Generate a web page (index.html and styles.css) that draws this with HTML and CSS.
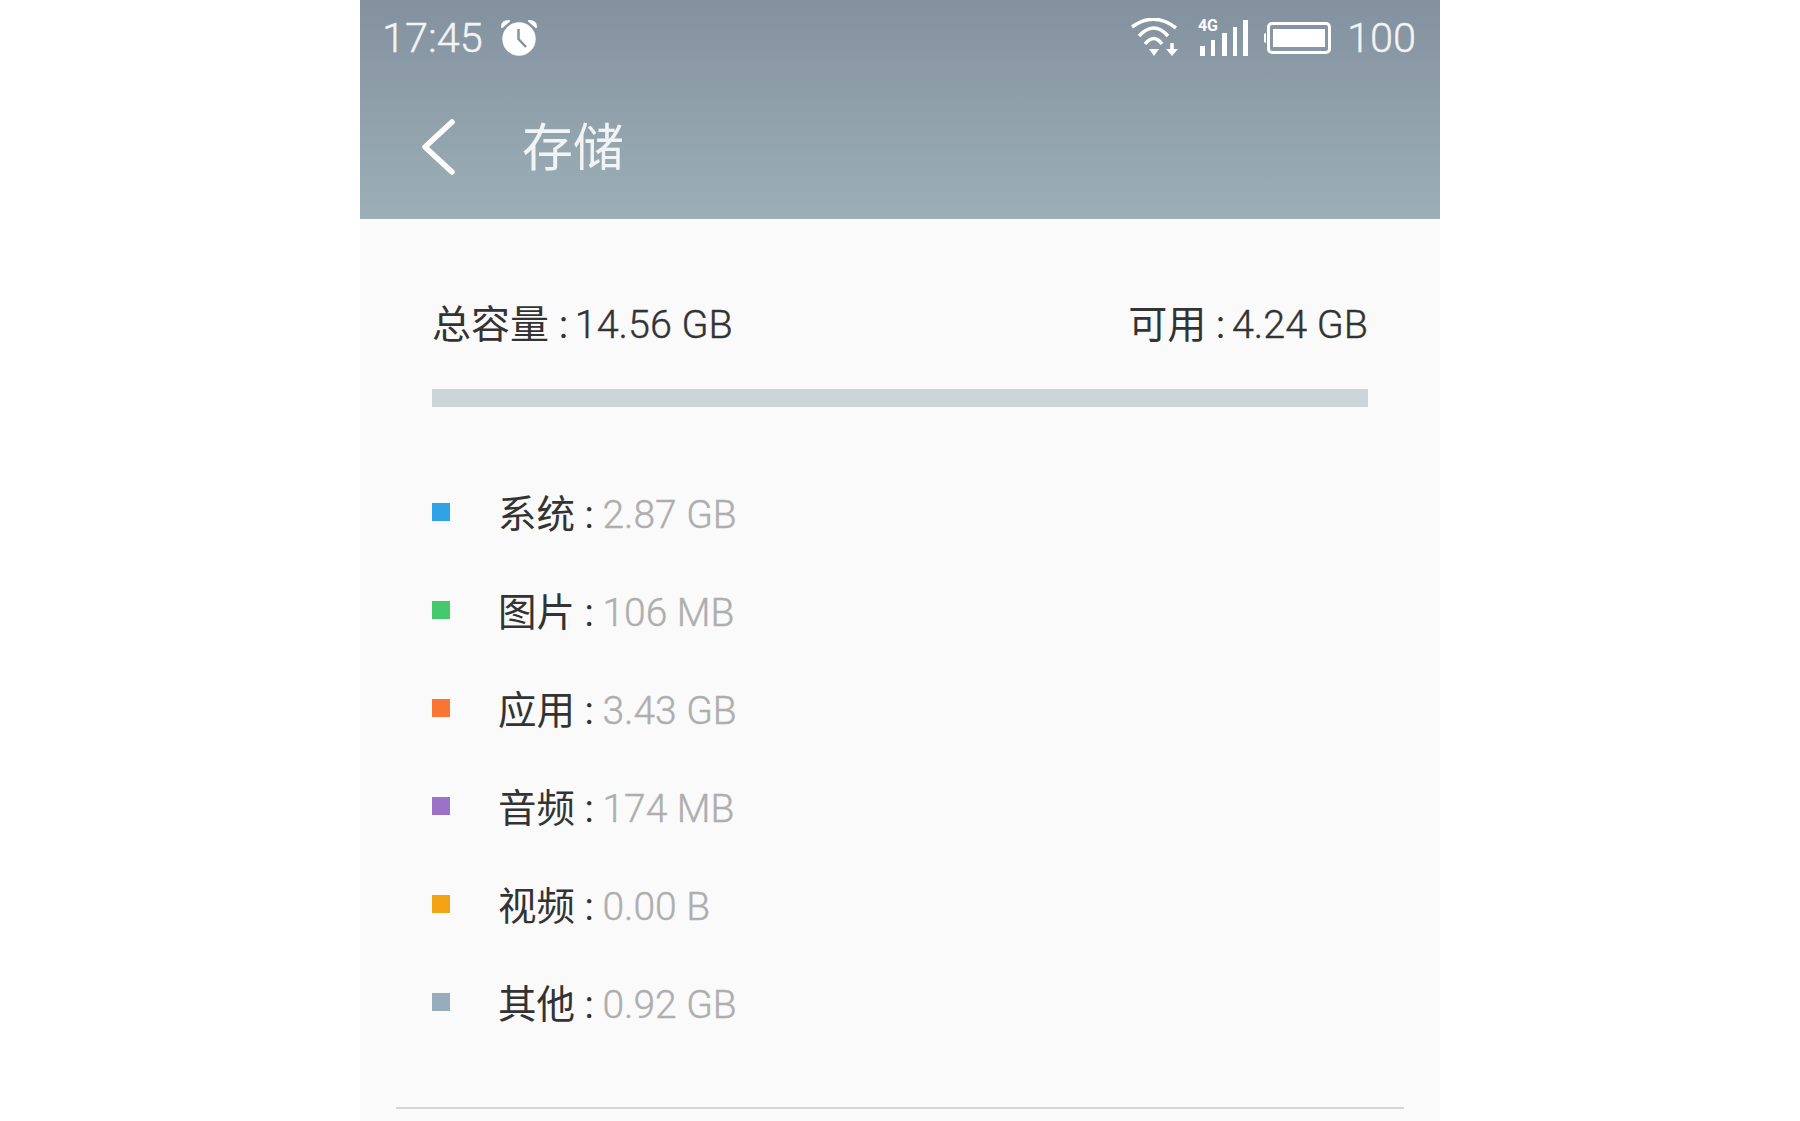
FILE: index.html
```html
<!DOCTYPE html>
<html lang="zh-CN">
<head>
  <meta charset="UTF-8">
  <title>存储</title>
  <link rel="stylesheet" href="styles.css">
</head>
<body>
  <div class="phone">
    <header class="header">
      <div class="status-bar">
        <div class="status-left">
          <span class="status-text">17:45</span>
          <svg class="alarm" width="38" height="38" viewBox="0 0 38 38">
            <circle cx="19" cy="20" r="16.7" fill="#fff"/>
            <path d="M2 8 Q2 2 9 2 Z M36 8 Q36 2 29 2 Z" fill="#fff" stroke="#fff" stroke-width="2" stroke-linejoin="round"/>
            <path d="M18.5 10 V20 L26 28" fill="none" stroke="#8593a0" stroke-width="2.5"/>
          </svg>
        </div>
        <div class="status-right">
          <svg class="wifi" width="47" height="40" viewBox="0 0 47 40">
            <path d="M1 9 Q23 -7 45 10 M8 18 Q23 2 37 18 M14 26 Q23 15 31 26" fill="none" stroke="#fff" stroke-width="3.5"/>
            <path d="M18 31 H28 L23 38 Z" fill="#fff"/>
            <path d="M41 25 V33" stroke="#fff" stroke-width="3.5"/>
            <path d="M35 31 H47 L41 38 Z" fill="#fff"/>
          </svg>
          <div class="signal">
            <span class="signal-label">4G</span>
            <svg width="48" height="36" viewBox="0 0 48 36">
              <path d="M0 26 H5 V36 H0 Z M11 20 H15 V36 H11 Z M22 13 H27 V36 H22 Z M33 7 H37 V36 H33 Z M43 0 H48 V36 H43 Z" fill="#fff"/>
            </svg>
          </div>
          <div class="battery"><div class="battery-fill"></div></div>
          <span class="status-text">100</span>
        </div>
      </div>
      <div class="title-bar">
        <svg class="back" width="36" height="58" viewBox="0 0 36 58">
          <path d="M32 4 L5 29 L32 54" fill="none" stroke="#fff" stroke-width="5.5" stroke-linecap="round" stroke-linejoin="round"/>
        </svg>
        <h1 class="title">存储</h1>
      </div>
    </header>

    <main class="content">
      <div class="totals">
        <span>总容量 : <b>14.56 GB</b></span>
        <span>可用 : <b>4.24 GB</b></span>
      </div>
      <div class="usage-bar"></div>
      <ul class="legend">
        <li><i class="dot blue"></i><span>系统 : <em>2.87 GB</em></span></li>
        <li><i class="dot green"></i><span>图片 : <em>106 MB</em></span></li>
        <li><i class="dot orange"></i><span>应用 : <em>3.43 GB</em></span></li>
        <li><i class="dot purple"></i><span>音频 : <em>174 MB</em></span></li>
        <li><i class="dot yellow"></i><span>视频 : <em>0.00 B</em></span></li>
        <li><i class="dot grey"></i><span>其他 : <em>0.92 GB</em></span></li>
      </ul>
      <div class="divider"></div>
    </main>
  </div>
</body>
</html>
```

FILE: styles.css
```css
* { box-sizing: border-box; }
html, body {
  height: 100%;
}
body {
  margin: 0;
  background: #fff;
  font-family: Roboto, "Noto Sans CJK SC", sans-serif;
  overflow: hidden;
}
.phone {
  width: 1080px;
  height: 1121px;
  margin: 0 auto;
  background: #fafafa;
  display: flex;
  flex-direction: column;
}
.header {
  height: 219px;
  background: linear-gradient(to bottom, #83919f, #9cafb6);
  color: #fff;
}
.status-bar {
  height: 75px;
  padding: 0 24px 0 22px;
  display: flex;
  justify-content: space-between;
  align-items: center;
}
.status-left, .status-right {
  display: flex;
  align-items: center;
}
.status-text {
  font-size: 41.5px;
  font-weight: 300;
  -webkit-text-stroke: 0.4px #f2f4f5;
  color: #f2f4f5;
}
.alarm {
  margin-left: 17px;
}
.wifi {
  margin-right: 22px;
}
.signal {
  position: relative;
  margin-right: 17px;
  height: 36px;
}
.signal svg {
  display: block;
}
.signal-label {
  position: absolute;
  left: -2px;
  top: 0;
  font-size: 16px;
  line-height: 12px;
  font-weight: 700;
}
.battery {
  width: 64px;
  height: 32px;
  margin-left: 2px;
  border: 3px solid #fff;
  border-radius: 5px;
  padding: 4px 3px;
  margin-right: 16px;
  position: relative;
}
.battery::before {
  content: "";
  position: absolute;
  left: -6px;
  top: 8px;
  width: 2px;
  height: 10px;
  background: #fff;
  border-radius: 2px 0 0 2px;
}
.battery-fill {
  height: 100%;
  background: #fff;
}
.title-bar {
  height: 144px;
  padding: 0 0 0 60px;
  display: flex;
  align-items: center;
}
.title {
  margin: 0 0 7px 66px;
  font-size: 51px;
  font-weight: 400;
  color: #f1f4f5;
}
.content {
  padding: 0 72px;
  flex: 1;
}
.totals {
  display: flex;
  justify-content: space-between;
  margin-top: 84px;
  font-size: 39px;
  line-height: 44px;
  color: #333;
}
.totals b {
  margin-left: -3px;
  font-size: 39.5px;
  font-weight: 300;
  -webkit-text-stroke: 0.4px #333;
}
.usage-bar {
  height: 18px;
  margin-top: 42px;
  background: #ccd6d8;
}
.legend {
  list-style: none;
  margin: 55px 0 0;
  padding: 0;
}
.legend li {
  height: 98px;
  display: flex;
  align-items: center;
  font-size: 38.5px;
  color: #333;
}
.legend em {
  margin-left: -1px;
  font-size: 39px;
  font-style: normal;
  font-weight: 300;
  -webkit-text-stroke: 0.4px #aeaeae;
  color: #aeaeae;
}
.dot {
  width: 18px;
  height: 18px;
  margin-right: 48px;
  margin-top: 1px;
}
.blue { background: #2fa3e6; }
.green { background: #45c96f; }
.orange { background: #f97534; }
.purple { background: #9b72c8; }
.yellow { background: #f2a414; }
.grey { background: #97adbe; }
.divider {
  height: 2px;
  margin: 57px -36px 0;
  background: #d6d6d6;
}
```
